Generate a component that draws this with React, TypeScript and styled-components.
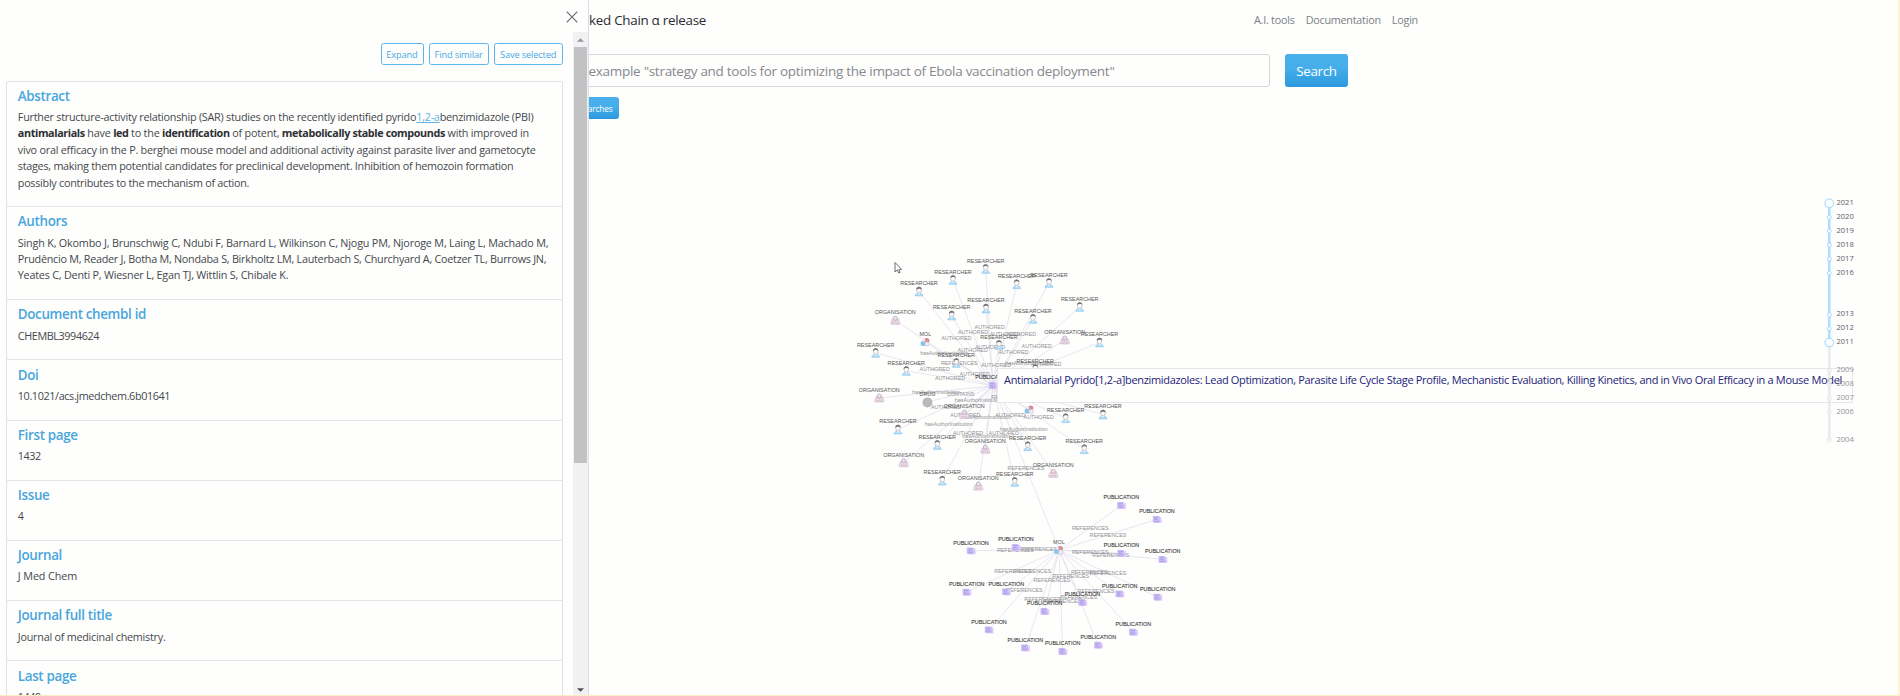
import React from "react";
import styled, { createGlobalStyle } from "styled-components";

const GlobalStyle = createGlobalStyle`
  * { box-sizing: border-box; }
  body {
    margin: 0;
    background: #fefefd;
    color: #44484c;
    font-family: "Open Sans", "Noto Sans", sans-serif;
  }
`;

const Page = styled.div`
  position: relative;
  width: 1900px;
  height: 696px;
  overflow: hidden;
  background: #fefefd;
  border-right: 2px solid #fcf4d2;
  border-bottom: 1px solid #f8efc4;
`;

/* ---------- main page ---------- */

const Header = styled.header`
  display: flex;
  justify-content: space-between;
  align-items: center;
  height: 39px;
  padding-left: 500px;
  width: 1418px;
`;

const Brand = styled.div`
  width: 206px;
  text-align: right;
  font-size: 13.4px;
  letter-spacing: -0.28px;
  color: #2b2b33;
  white-space: nowrap;
`;

const Nav = styled.nav`
  display: flex;
  gap: 11px;
  font-size: 10.8px;
  letter-spacing: -0.24px;
  color: #7c7f84;
`;

const SearchRow = styled.div`
  display: flex;
  gap: 15.5px;
  height: 33px;
  margin-top: 15px;
  padding-left: 482px;
`;

const SearchField = styled.div`
  display: flex;
  align-items: center;
  width: 787.5px;
  border: 1px solid #d4d7da;
  border-radius: 3px;
`;

const Placeholder = styled.span`
  width: 631.5px;
  text-align: right;
  white-space: nowrap;
  font-size: 13.5px;
  letter-spacing: -0.286px;
  color: #85898d;
`;

const PrimaryButton = styled.button<{ $small?: boolean }>`
  display: flex;
  align-items: center;
  justify-content: ${(p) => (p.$small ? "flex-end" : "center")};
  height: ${(p) => (p.$small ? 22 : 33)}px;
  width: ${(p) => (p.$small ? 137 : 63)}px;
  padding: 0 ${(p) => (p.$small ? 6.5 : 0)}px;
  border: 0;
  border-radius: 3px;
  background: linear-gradient(#4ab0ec, #44adea 45%, #2b99dd);
  color: #fff;
  font-family: inherit;
  font-size: ${(p) => (p.$small ? 8.3 : 13.4)}px;
  letter-spacing: ${(p) => (p.$small ? -0.16 : -0.35)}px;
  white-space: nowrap;
`;

const SavedRow = styled.div`
  margin-top: 10px;
  padding-left: 482px;
`;

const Graph = styled.svg`
  position: absolute;
  left: 589px;
  top: 240px;
  font-family: "Liberation Sans", Arial, sans-serif;
  font-size: 5.4px;
  text-anchor: middle;
`;

const Tooltip = styled.div`
  position: absolute;
  left: 997px;
  top: 368px;
  width: 856px;
  height: 34.5px;
  padding: 3px 0 0 6px;
  border: 1px solid #e6e7ec;
  background: #fefefd;
  color: #23237a;
  font-size: 11px;
  line-height: 15px;
  letter-spacing: -0.33px;
  white-space: nowrap;
`;

const Timeline = styled.svg`
  position: absolute;
  left: 1815px;
  top: 190px;
  font-size: 7.6px;
`;

/* ---------- details panel ---------- */

const Panel = styled.aside`
  position: absolute;
  left: 0;
  top: 0;
  width: 589px;
  height: 695px;
  display: flex;
  flex-direction: column;
  background: #fefefd;
  border-right: 1px solid #dcdce2;
`;

const PanelHeader = styled.div`
  display: flex;
  justify-content: flex-end;
  align-items: center;
  flex: none;
  height: 32px;
  padding: 1px 10px 0 0;
`;

const PanelBody = styled.div`
  display: flex;
  flex: 1;
  min-height: 0;
`;

const PanelContent = styled.div`
  width: 573px;
  padding: 11px 10px 0 6px;
  overflow: hidden;
`;

const Actions = styled.div`
  display: flex;
  justify-content: flex-end;
  gap: 5px;
  margin-bottom: 16px;
`;

const OutlineButton = styled.button<{ $width: number }>`
  width: ${(p) => p.$width}px;
  height: 22px;
  padding: 0 1px 0 0;
  border: 1px solid #5bb5ea;
  border-radius: 2.5px;
  background: transparent;
  color: #48a9e2;
  font-family: inherit;
  font-size: 9.3px;
  letter-spacing: -0.17px;
  white-space: nowrap;
`;

const List = styled.div`
  border: 1px solid #dfe1e8;
  border-radius: 2px;
`;

const Item = styled.section`
  padding: 4.7px 0 15.4px 10.8px;
  & + & {
    border-top: 1px solid #e4e5e9;
    padding-top: 5.2px;
  }
`;

const ItemTitle = styled.h3`
  margin: 0 0 4.2px;
  font-size: 13.4px;
  line-height: 18px;
  font-weight: 600;
  letter-spacing: -0.33px;
  color: #48a6dc;
`;

const Line = styled.div<{ $spacing?: number }>`
  font-size: 10.8px;
  line-height: 16.4px;
  letter-spacing: ${(p) => p.$spacing ?? -0.24}px;
  white-space: nowrap;
`;

const Strong = styled.b`
  color: #2c2f33;
  letter-spacing: -0.38px;
`;

const Link = styled.a`
  color: #5db4e6;
  text-decoration: underline;
  text-decoration-skip-ink: none;
`;

const Scrollbar = styled.div`
  display: flex;
  flex-direction: column;
  align-items: center;
  width: 15px;
  background: #f1f1f4;
`;

const Arrow = styled.svg`
  flex: none;
  width: 15px;
  height: 15px;
`;

const Thumb = styled.div`
  width: 13px;
  height: 416px;
  margin-bottom: auto;
  background: #c2c2c4;
`;

/* ---------- graph data ---------- */

type Kind = "RESEARCHER" | "ORGANISATION" | "MOL" | "PUBLICATION" | "DRUG";
type GraphNode = [Kind, number, number];

const HUB: [number, number] = [993, 385.7];
const MOL_HUB: [number, number] = [1059, 550];

const hubNodes: GraphNode[] = [
  ["RESEARCHER", 985.7, 260.7],
  ["RESEARCHER", 953, 271.7],
  ["RESEARCHER", 919, 283.3],
  ["RESEARCHER", 1016.7, 276],
  ["RESEARCHER", 1049, 274.7],
  ["RESEARCHER", 986, 300.3],
  ["RESEARCHER", 951.7, 307.3],
  ["RESEARCHER", 1033, 310.7],
  ["RESEARCHER", 1079.7, 298.7],
  ["RESEARCHER", 999, 336.7],
  ["RESEARCHER", 1099.5, 334.3],
  ["RESEARCHER", 875.7, 344.7],
  ["RESEARCHER", 956.3, 354.7],
  ["RESEARCHER", 906.3, 362.7],
  ["RESEARCHER", 1035.3, 360.7],
  ["ORGANISATION", 895.3, 312.3],
  ["ORGANISATION", 1064.7, 332],
  ["MOL", 925.3, 334],
  ["ORGANISATION", 879.3, 390],
  ["DRUG", 927.5, 394],
  ["ORGANISATION", 964.3, 406.3],
  ["MOL", 1029.3, 401.5],
  ["RESEARCHER", 1065.7, 410],
  ["RESEARCHER", 1103, 406.3],
  ["RESEARCHER", 898, 421.3],
  ["RESEARCHER", 937.3, 436.7],
  ["RESEARCHER", 1027.7, 438],
  ["RESEARCHER", 1084.3, 441],
  ["ORGANISATION", 985.3, 441.2],
  ["ORGANISATION", 903.7, 454.7],
  ["RESEARCHER", 942.3, 472.4],
  ["ORGANISATION", 978.3, 478],
  ["RESEARCHER", 1014.7, 473.7],
  ["ORGANISATION", 1053.3, 465.3],
];

const molNodes: GraphNode[] = (
  [
    [1121.3, 497.3], [1157, 511.3], [1121.5, 545.3], [1162.7, 551.3],
    [971, 542.7], [1016, 539.3], [966.7, 584], [1006.3, 583.7],
    [1119.7, 585.7], [1157.7, 589], [1082.5, 594.3], [1044.7, 603.3],
    [989, 621.7], [1133.3, 624], [1025.3, 639.7], [1062.7, 643.3],
    [1098.3, 637],
  ] as [number, number][]
).map(([x, y]) => ["PUBLICATION", x, y]);

const edgeLabels: Record<string, [number, number][]> = {
  AUTHORED: [
    [989.7, 327], [973, 332.3], [1005, 334.3], [956.3, 338.3], [1021, 334],
    [990, 347], [972.7, 350], [1013.3, 352.3], [1036.7, 346], [996, 365],
    [1046.3, 363.7], [934.7, 369], [974.7, 374], [950, 378], [946, 407.3],
    [965.3, 414.7], [1010.3, 415.3], [1038.7, 417.3], [968, 433], [1003.7, 433],
  ],
  CONTAINS: [[960.7, 394]],
  hasAuthorInstitution: [
    [944, 353], [1029, 363.3], [936, 391.7], [978.7, 400], [987.3, 417.3],
    [948.7, 424], [1023.7, 429.3], [986, 435.7],
  ],
  REFERENCES: [
    [959.3, 363.3], [1010, 397], [1026, 468], [1090.3, 527.7], [1108, 534.7],
    [1090.3, 551.7], [1110.7, 554.7], [1015.3, 550.3], [1038.7, 548.7],
    [1012.7, 570.7], [1032.7, 570.7], [1089.3, 571.7], [1108, 573.3],
    [1070.7, 576], [1052, 580.3], [1024.3, 589.7], [1096, 591.3],
    [1042.7, 598.7], [1078.7, 597.3], [1062.7, 600.7],
  ],
};

function NodeIcon({ kind }: { kind: Kind }) {
  switch (kind) {
    case "RESEARCHER":
      return (
        <g>
          <path d="M-3.9 4.4 C-3.6 2.2 -2 1.6 0 1.6 S3.6 2.2 3.9 4.4 Z" fill="#b7def7" stroke="#82c0e8" strokeWidth=".6" />
          <ellipse cx="0" cy="-1.5" rx="2.3" ry="3" fill="#fdfbfa" stroke="#a4a4a8" strokeWidth=".6" />
          <path d="M-2.7 -1.8 C-3 -5.6 3 -5.6 2.7 -1.8 C1.6 -3.2 -1.2 -3.2 -2.7 -1.8 Z" fill="#727378" />
          <path d="M-1.2 1.8 L0 3.2 L1.2 1.8 Z" fill="#fff" />
        </g>
      );
    case "ORGANISATION":
      return (
        <g>
          <path d="M-4.3 3.8 C-5.2 1.4 -3.8 -.4 -2 -.4 L2 -.4 C3.8 -.4 5.2 1.4 4.3 3.8 Z" fill="#ecdfea" stroke="#c9b2c6" strokeWidth=".6" />
          <circle cx="-2.7" cy="-.6" r="1.3" fill="#dfcadb" />
          <circle cx="2.7" cy="-.6" r="1.3" fill="#dfcadb" />
          <circle cx="0" cy="-2.2" r="2" fill="#efe2ed" stroke="#b39fb2" strokeWidth=".7" />
          <path d="M-2 3.6 V1.4 M2 3.6 V1.4 M-.7 2 H.7" stroke="#bb9cb4" strokeWidth=".6" />
        </g>
      );
    case "MOL":
      return (
        <g>
          <circle cx="-2" cy="1.2" r="2.7" fill="#86c6ee" />
          <circle cx="1.4" cy="-1.6" r="2.7" fill="#dd8796" />
          <circle cx="1.8" cy="1.8" r="2.3" fill="#f1e9f1" stroke="#bdb8c6" strokeWidth=".5" />
          <circle cx="-1.3" cy="-1.7" r="1.4" fill="#e6e4ee" />
        </g>
      );
    case "PUBLICATION":
      return (
        <g>
          <rect x="-2.6" y="-2.6" width="7.2" height="6.2" rx=".8" fill="#dfd3f9" />
          <rect x="-4.2" y="-3.4" width="6.8" height="6.6" rx=".8" fill="#c9bdf6" />
          <path d="M-2.8 -1.8 H1.4 M-2.8 0 H.4 M-2.8 1.8 H1" stroke="#a194e6" strokeWidth=".7" />
          <rect x=".6" y=".2" width="2.8" height="2.4" fill="#d2a9ec" opacity=".7" />
        </g>
      );
    default:
      return <circle cx="0" cy=".2" r="5" fill="#b9b9b9" />;
  }
}

function Node({ node: [kind, x, y] }: { node: GraphNode }) {
  const strong = kind === "PUBLICATION";
  return (
    <g>
      <g transform={`translate(${x} ${y + 8.2})`}>
        <NodeIcon kind={kind} />
      </g>
      <text x={x} y={y + 1.9} fill={strong ? "#3c3c3c" : "#555"} stroke={strong ? "#3c3c3c" : "none"} strokeWidth=".1">
        {kind}
      </text>
    </g>
  );
}

function KnowledgeGraph() {
  return (
    <Graph width={640} height={450} viewBox="589 240 640 450">
      <g stroke="#dfdbe9" strokeWidth=".7">
        {hubNodes.map(([, x, y], i) => (
          <line key={i} x1={HUB[0]} y1={HUB[1]} x2={x} y2={y + 8} />
        ))}
        {molNodes.map(([, x, y], i) => (
          <line key={i} x1={MOL_HUB[0]} y1={MOL_HUB[1]} x2={x} y2={y + 8} />
        ))}
        <line x1={HUB[0]} y1={HUB[1]} x2={MOL_HUB[0]} y2={MOL_HUB[1]} />
      </g>
      <g fill="#909095">
        {Object.entries(edgeLabels).map(([label, points]) =>
          points.map(([x, y], i) => (
            <text key={label + i} x={x} y={y + 1.9}>
              {label}
            </text>
          ))
        )}
      </g>
      {hubNodes.map((n, i) => (
        <Node key={i} node={n} />
      ))}
      {molNodes.map((n, i) => (
        <Node key={i} node={n} />
      ))}
      <Node node={["PUBLICATION", 993, 377.3]} />
      <Node node={["MOL", 1058.8, 542]} />
      <path d="M895 262.5 V272 L897.3 270 L898.8 273 L900.2 272.4 L898.8 269.5 L901.6 269.3 Z" fill="#fff" stroke="#4a4a4e" strokeWidth=".8" />
    </Graph>
  );
}

/* ---------- timeline ---------- */

const years = [2021, 2020, 2019, 2018, 2017, 2016, 2013, 2012, 2011, 2009, 2008, 2007, 2006, 2004];
const yearY = (year: number) => 13.3 + (2021 - year) * 13.93;

function YearTimeline() {
  return (
    <Timeline width={45} height={262}>
      <line x1="14.3" x2="14.3" y1={yearY(2011)} y2={yearY(2004)} stroke="#e4e4e8" strokeOpacity=".75" strokeWidth="2.6" />
      <line x1="14.3" x2="14.3" y1={yearY(2021)} y2={yearY(2011)} stroke="#aee0fa" strokeWidth="2.6" />
      {years.map((year) => {
        const end = year === 2021 || year === 2011;
        const active = year >= 2011;
        return (
          <g key={year}>
            <circle
              cx="14.3"
              cy={yearY(year)}
              r={end ? 4.3 : 1.9}
              fill="#fefefd"
              fillOpacity={active ? 1 : 0.6}
              stroke={active ? "#a4dcfa" : "#e4e4e8"}
              strokeWidth={end ? 1.1 : 1}
            />
            <text x="21.4" y={yearY(year) + 1.7} fill={active ? "#606265" : "#929396"}>
              {year}
            </text>
          </g>
        );
      })}
    </Timeline>
  );
}

/* ---------- details ---------- */

const details: { title: string; lines: { text: React.ReactNode; spacing?: number }[] }[] = [
  {
    title: "Abstract",
    lines: [
      {
        text: (
          <>
            Further structure-activity relationship (SAR) studies on the recently identified pyrido
            <Link>1,2-a</Link>benzimidazole (PBI)
          </>
        ),
      },
      {
        text: (
          <>
            <Strong>antimalarials</Strong> have <Strong>led</Strong> to the <Strong>identification</Strong> of potent,{" "}
            <Strong>metabolically stable compounds</Strong> with improved in
          </>
        ),
        spacing: -0.22,
      },
      { text: "vivo oral efficacy in the P. berghei mouse model and additional activity against parasite liver and gametocyte", spacing: -0.23 },
      { text: "stages, making them potential candidates for preclinical development. Inhibition of hemozoin formation", spacing: -0.26 },
      { text: "possibly contributes to the mechanism of action.", spacing: -0.27 },
    ],
  },
  {
    title: "Authors",
    lines: [
      { text: "Singh K, Okombo J, Brunschwig C, Ndubi F, Barnard L, Wilkinson C, Njogu PM, Njoroge M, Laing L, Machado M,", spacing: -0.19 },
      { text: "Prudêncio M, Reader J, Botha M, Nondaba S, Birkholtz LM, Lauterbach S, Churchyard A, Coetzer TL, Burrows JN,", spacing: -0.26 },
      { text: "Yeates C, Denti P, Wiesner L, Egan TJ, Wittlin S, Chibale K.", spacing: -0.22 },
    ],
  },
  { title: "Document chembl id", lines: [{ text: "CHEMBL3994624", spacing: -0.39 }] },
  { title: "Doi", lines: [{ text: "10.1021/acs.jmedchem.6b01641", spacing: -0.37 }] },
  { title: "First page", lines: [{ text: "1432", spacing: -0.4 }] },
  { title: "Issue", lines: [{ text: "4" }] },
  { title: "Journal", lines: [{ text: "J Med Chem", spacing: -0.11 }] },
  { title: "Journal full title", lines: [{ text: "Journal of medicinal chemistry." }] },
  { title: "Last page", lines: [{ text: "1449", spacing: -0.4 }] },
];

function DetailsPanel() {
  return (
    <Panel>
      <PanelHeader>
        <svg width="12" height="12" viewBox="0 0 12 12" stroke="#6b6e72" strokeWidth="1.2">
          <path d="M.7 .7 L11.3 11.3 M11.3 .7 L.7 11.3" />
        </svg>
      </PanelHeader>
      <PanelBody>
        <PanelContent>
          <Actions>
            <OutlineButton $width={42.7}>Expand</OutlineButton>
            <OutlineButton $width={60.5}>Find similar</OutlineButton>
            <OutlineButton $width={68.7}>Save selected</OutlineButton>
          </Actions>
          <List>
            {details.map((d) => (
              <Item key={d.title}>
                <ItemTitle>{d.title}</ItemTitle>
                {d.lines.map((l, i) => (
                  <Line key={i} $spacing={l.spacing}>
                    {l.text}
                  </Line>
                ))}
              </Item>
            ))}
          </List>
        </PanelContent>
        <Scrollbar>
          <Arrow viewBox="0 0 15 15">
            <path d="M4 9.8 L7.5 6.3 L11 9.8 Z" fill="#96969a" />
          </Arrow>
          <Thumb />
          <Arrow viewBox="0 0 15 15">
            <path d="M4 8.3 L7.5 11.8 L11 8.3 Z" fill="#505054" />
          </Arrow>
        </Scrollbar>
      </PanelBody>
    </Panel>
  );
}

export default function App() {
  return (
    <Page>
      <GlobalStyle />
      <Header>
        <Brand>Linked Chain α release</Brand>
        <Nav>
          <span>A.I. tools</span>
          <span>Documentation</span>
          <span>Login</span>
        </Nav>
      </Header>
      <SearchRow>
        <SearchField>
          <Placeholder>For example "strategy and tools for optimizing the impact of Ebola vaccination deployment"</Placeholder>
        </SearchField>
        <PrimaryButton>Search</PrimaryButton>
      </SearchRow>
      <SavedRow>
        <PrimaryButton $small>Saved searches</PrimaryButton>
      </SavedRow>
      <KnowledgeGraph />
      <Tooltip>
        Antimalarial Pyrido[1,2-a]benzimidazoles: Lead Optimization, Parasite Life Cycle Stage Profile, Mechanistic
        Evaluation, Killing Kinetics, and in Vivo Oral Efficacy in a Mouse Model
      </Tooltip>
      <YearTimeline />
      <DetailsPanel />
    </Page>
  );
}
